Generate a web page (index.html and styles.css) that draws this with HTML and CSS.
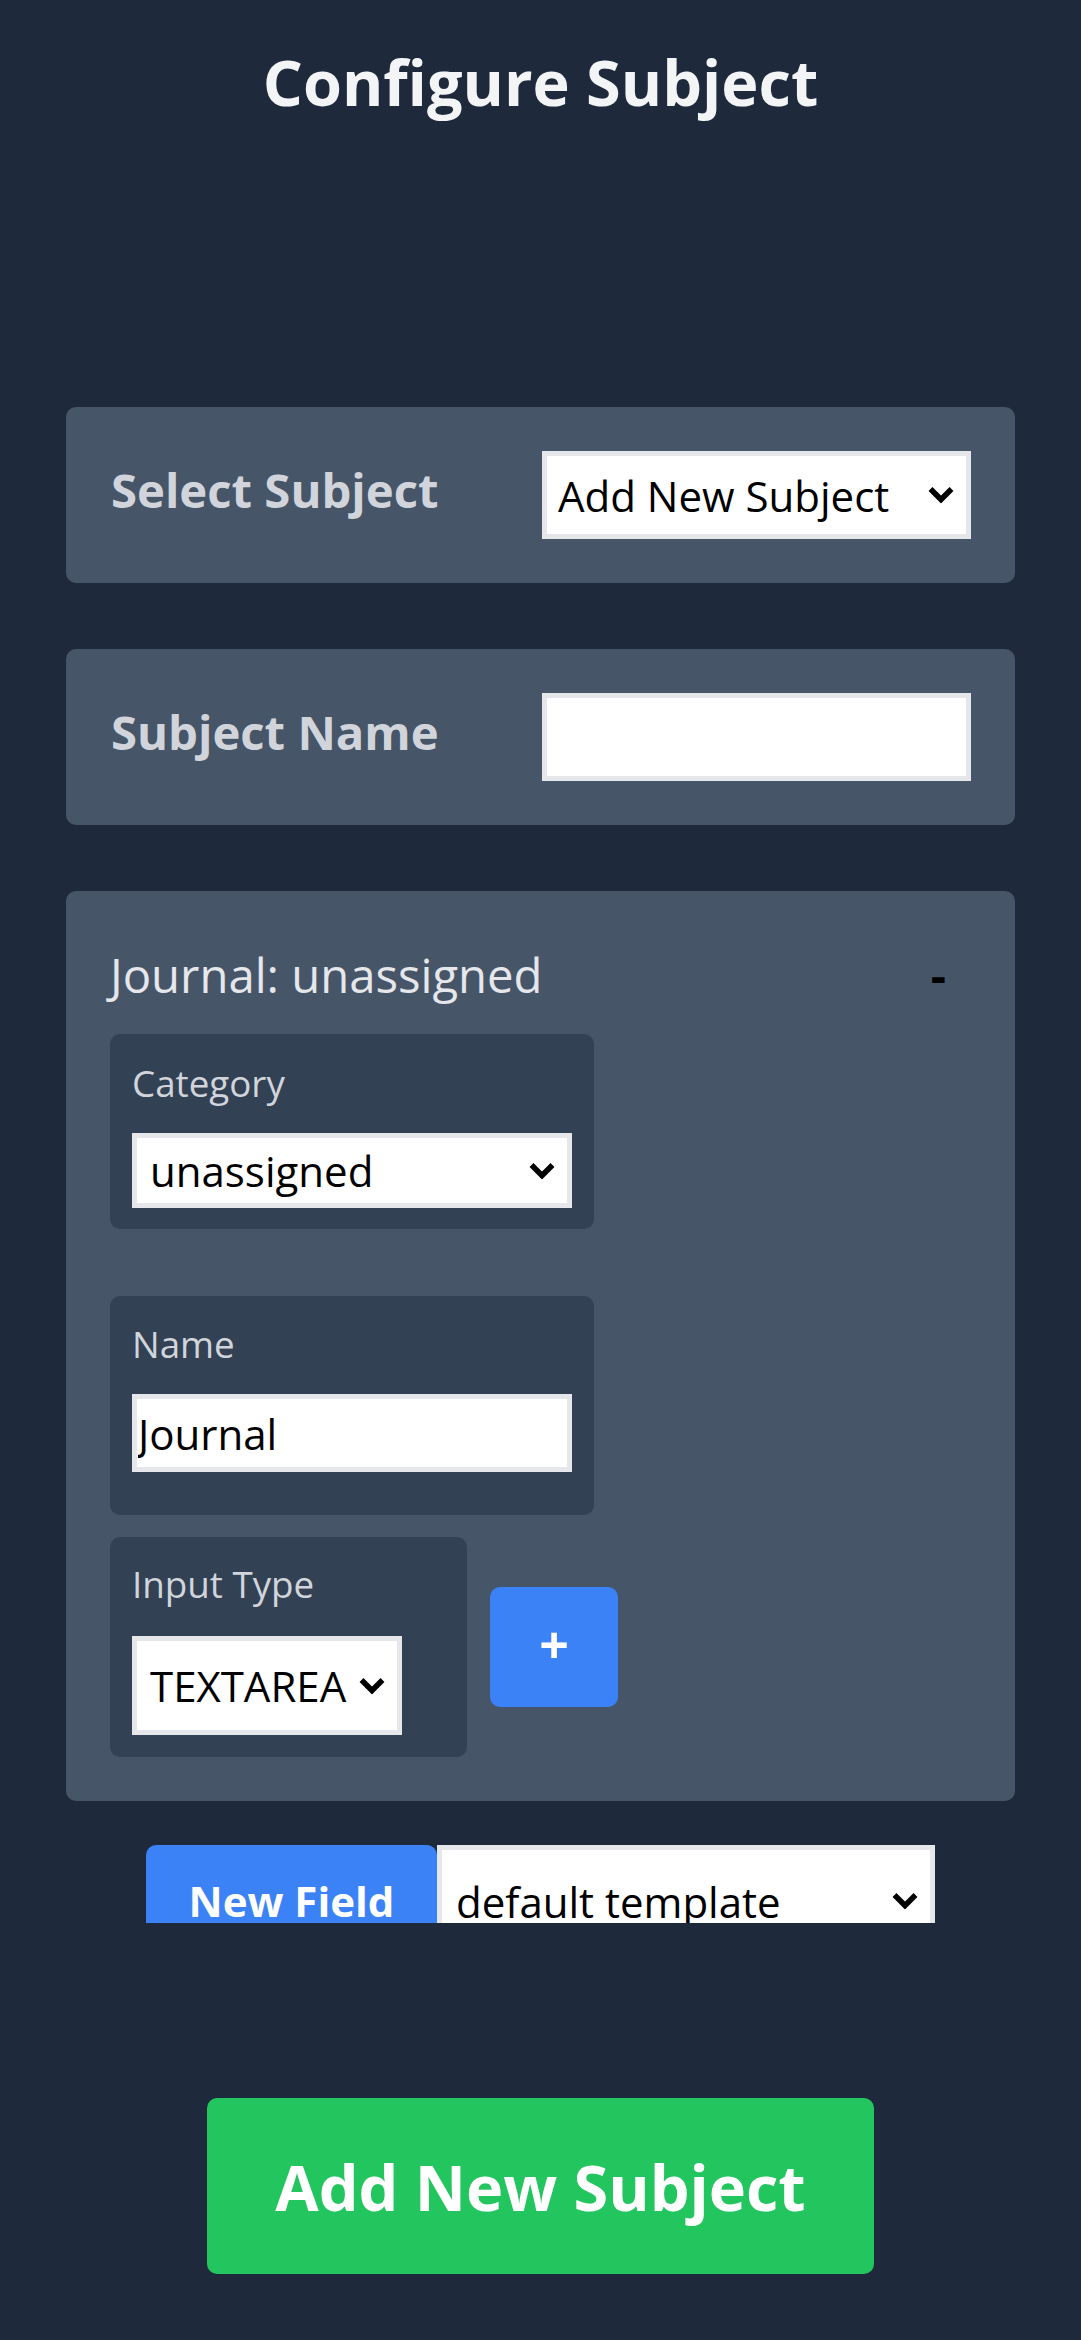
FILE: index.html
```html
<!DOCTYPE html>
<html lang="en">
<head>
<meta charset="utf-8">
<title>Configure Subject</title>
<link rel="stylesheet" href="styles.css">
</head>
<body>
<main class="page">
  <h1 class="title">Configure Subject</h1>

  <section class="panel panel-row">
    <label class="panel-label">Select Subject</label>
    <div class="select-wrap select-subject">
      <select class="control">
        <option>Add New Subject</option>
      </select>
      <svg class="chev" viewBox="0 0 26 17" width="26" height="17"><polyline points="2.5,2.5 13,13 23.5,2.5" fill="none" stroke="#000" stroke-width="5.5"/></svg>
    </div>
  </section>

  <section class="panel panel-row">
    <label class="panel-label">Subject Name</label>
    <input class="control text-input subject-name" type="text" value="">
  </section>

  <section class="panel field-panel">
    <div class="field-head">
      <span class="field-title">Journal: unassigned</span>
      <button class="collapse" type="button">-</button>
    </div>

    <div class="subbox box-category">
      <div class="sub-label">Category</div>
      <div class="select-wrap select-category">
        <select class="control">
          <option>unassigned</option>
        </select>
        <svg class="chev" viewBox="0 0 26 17" width="26" height="17"><polyline points="2.5,2.5 13,13 23.5,2.5" fill="none" stroke="#000" stroke-width="5.5"/></svg>
      </div>
    </div>

    <div class="subbox box-name">
      <div class="sub-label">Name</div>
      <input class="control text-input name-input" type="text" value="Journal">
    </div>

    <div class="type-row">
      <div class="subbox box-type">
        <div class="sub-label">Input Type</div>
        <div class="select-wrap select-type">
          <select class="control">
            <option>TEXTAREA</option>
          </select>
          <svg class="chev" viewBox="0 0 26 17" width="26" height="17"><polyline points="2.5,2.5 13,13 23.5,2.5" fill="none" stroke="#000" stroke-width="5.5"/></svg>
        </div>
      </div>
      <button class="plus" type="button">+</button>
    </div>
  </section>

  <div class="new-field-bar">
    <button class="new-field" type="button">New Field</button>
    <div class="select-wrap select-template">
      <select class="control">
        <option>default template</option>
      </select>
      <svg class="chev" viewBox="0 0 26 17" width="26" height="17"><polyline points="2.5,2.5 13,13 23.5,2.5" fill="none" stroke="#000" stroke-width="5.5"/></svg>
    </div>
  </div>

  <div class="submit-row">
    <button class="add-subject" type="button">Add New Subject</button>
  </div>
</main>
</body>
</html>
```
FILE: styles.css
```css
* { box-sizing: border-box; }

html, body {
  margin: 0;
  padding: 0;
  background: #1e293b;
}

body {
  font-family: "Open Sans", "Noto Sans", sans-serif;
  color: #e5e7eb;
  min-height: 2340px;
}

.page {
  padding: 40px 66px 66px;
  display: flex;
  flex-direction: column;
}

.title {
  margin: 0;
  font-size: 63px;
  line-height: 84px;
  font-weight: 700;
  color: #f3f4f6;
  text-align: center;
}

.panel {
  background: #475569;
  border-radius: 10px;
}

.panel-row {
  margin-top: 66px;
  padding: 44px 44px 44px 45px;
  display: flex;
  align-items: center;
  justify-content: space-between;
  height: 176px;
}

.title + .panel-row {
  margin-top: 283px;
}

.panel-label {
  font-size: 47.25px;
  line-height: 73.5px;
  font-weight: 700;
  color: #d1d5db;
  padding-bottom: 10px;
}

.control {
  font-family: "Open Sans", "Noto Sans", sans-serif;
  font-size: 42px;
  color: #000;
  background: #fff;
  border: 5px solid #e5e7eb;
  border-radius: 0;
  margin: 0;
  outline: none;
}

select.control {
  -webkit-appearance: none;
  appearance: none;
  width: 100%;
  height: 100%;
  padding: 0 50px 0 11px;
  line-height: normal;
}

.select-wrap {
  position: relative;
  display: block;
}

.chev {
  position: absolute;
  right: 17px;
  top: 50%;
  transform: translateY(-50%);
  pointer-events: none;
}

.select-subject {
  width: 429px;
  height: 88px;
}

.subject-name {
  width: 429px;
  height: 88px;
  padding: 0 8px;
}

.field-panel {
  margin-top: 66px;
  padding: 47px 44px 44px 44px;
  display: flex;
  flex-direction: column;
  align-items: flex-start;
}

.field-head {
  align-self: stretch;
  display: flex;
  justify-content: space-between;
  align-items: baseline;
  margin-bottom: 22.5px;
}

.field-title {
  font-size: 47.25px;
  line-height: 73.5px;
  font-weight: 400;
  color: #e5e7eb;
}

.collapse {
  background: transparent;
  border: 0;
  padding: 0 25px;
  font-family: "Open Sans", "Noto Sans", sans-serif;
  font-size: 47.25px;
  font-weight: 700;
  color: #000;
  line-height: 73.5px;
}

.subbox {
  background: #334155;
  border-radius: 10px;
  padding: 22px;
  display: flex;
  flex-direction: column;
}

.sub-label {
  font-size: 36.75px;
  line-height: 52.5px;
  color: #d1d5db;
  margin-bottom: 24px;
}

.box-category {
  width: 484px;
  padding-top: 22.5px;
  padding-bottom: 21px;
}

.select-category {
  width: 440px;
  height: 75px;
}

.select-category select.control {
  padding-left: 13px;
}

.box-name {
  width: 484px;
  margin-top: 67px;
  padding-top: 21.5px;
  padding-bottom: 43px;
}

.name-input {
  width: 440px;
  height: 78px;
  padding: 0 0 0 1px;
}

.type-row {
  margin-top: 22px;
  display: flex;
  align-items: center;
  gap: 23px;
}

.box-type {
  width: 357px;
  padding-top: 20.5px;
  padding-bottom: 22px;
}

.box-type .sub-label {
  margin-bottom: 26px;
}

.select-type {
  width: 270px;
  height: 99px;
}

.select-type select.control {
  padding-left: 13px;
}

.plus {
  width: 128px;
  height: 120px;
  border: 0;
  border-radius: 10px;
  background: #3b82f6;
  color: #fff;
  font-family: "Open Sans", "Noto Sans", sans-serif;
  font-size: 52px;
  font-weight: 700;
  line-height: 1;
  padding: 0 0 6px;
}

.new-field-bar {
  margin-top: 44px;
  align-self: center;
  width: 789px;
  height: 78px;
  overflow: hidden;
  display: flex;
  align-items: flex-start;
}

.new-field {
  width: 291px;
  height: 112px;
  flex: none;
  border: 0;
  border-radius: 10px 10px 0 0;
  background: #3b82f6;
  color: #fff;
  font-family: "Open Sans", "Noto Sans", sans-serif;
  font-size: 42px;
  font-weight: 700;
  line-height: 63px;
  padding: 24px 0 25px;
  display: flex;
  justify-content: center;
  align-items: flex-start;
}

.select-template {
  width: 498px;
  height: 112px;
  flex: none;
}

.select-template select.control {
  padding-left: 14px;
}

.submit-row {
  margin-top: 175px;
  display: flex;
  justify-content: center;
}

.add-subject {
  width: 667px;
  height: 176px;
  border: 0;
  border-radius: 10px;
  background: #22c55e;
  color: #fff;
  font-family: "Open Sans", "Noto Sans", sans-serif;
  font-size: 63px;
  font-weight: 700;
  padding: 0;
}
```
